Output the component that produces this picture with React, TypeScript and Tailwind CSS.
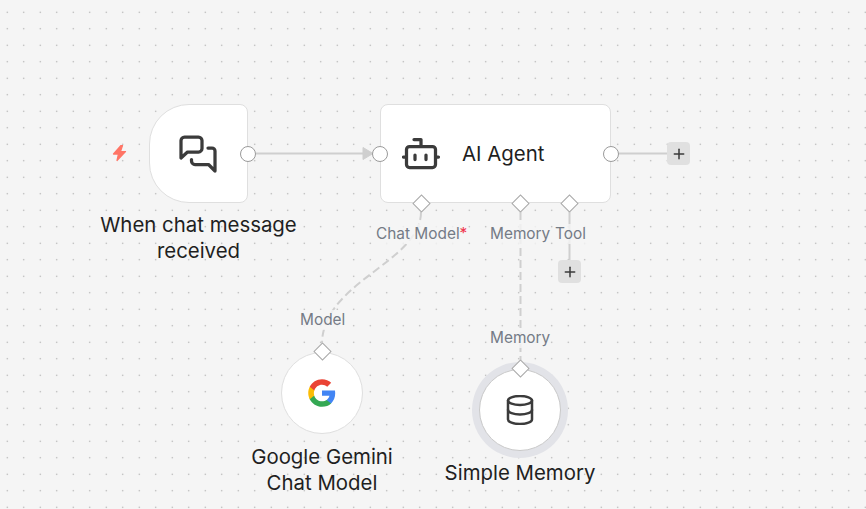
import { Plus } from 'lucide-react';

const Handle = ({ className }: { className: string }) => (
  <div className={`absolute w-4 h-4 rounded-full bg-white border border-[#9a9a9a] ${className}`} />
);

const Diamond = ({ className }: { className: string }) => (
  <div className={`absolute w-[13px] h-[13px] rotate-45 bg-white border border-[#a8a8a8] ${className}`} />
);

const PlusButton = ({ className }: { className: string }) => (
  <div className={`absolute w-[23px] h-[23px] rounded bg-[#e0e0e0] flex items-center justify-center text-[#3a3a3a] ${className}`}>
    <Plus size={16} strokeWidth={2.25} />
  </div>
);

const EdgeLabel = ({ className, children }: { className: string; children: React.ReactNode }) => (
  <div className={`absolute text-[15.4px] leading-5 text-[#747b86] bg-[#f5f5f5]/80 whitespace-nowrap ${className}`}>{children}</div>
);

const NodeLabel = ({ className, children }: { className: string; children: React.ReactNode }) => (
  <div className={`absolute text-[20.4px] leading-[26px] text-[#1f1f1f] text-center ${className}`}>{children}</div>
);

const Edges = () => (
  <svg className="absolute inset-0" width="866" height="509" fill="none">
    <path d="M256 153.5H364" stroke="#cfcfcf" strokeWidth="2" />
    <path d="M363 147.5L373 153.5L363 159.5Z" fill="#cfcfcf" stroke="#cfcfcf" strokeWidth="1" />
    <path d="M619 153.5H668" stroke="#cfcfcf" strokeWidth="2" />
    <path d="M569.5 212V260" stroke="#cfcfcf" strokeWidth="2" />
    <path d="M520.5 212V360" stroke="#cfcfcf" strokeWidth="2" strokeDasharray="8 4" />
    <path d="M421 212C421 262 322 282 322 344" stroke="#cfcfcf" strokeWidth="2" strokeDasharray="8 4" />
  </svg>
);

const App = () => {
  return (
    <div
      className="relative w-[866px] h-[509px] overflow-hidden bg-[#f5f5f5] bg-[radial-gradient(circle,#a3a3a3_0.7px,transparent_1px)] bg-[size:16.5px_16.5px] bg-[position:-1px_4px]"
      style={{ fontFamily: 'Inter, sans-serif' }}
    >
      <Edges />

      {/* trigger bolt */}
      <svg className="absolute left-[111px] top-[144px]" width="17" height="18" viewBox="0 0 17 18">
        <path d="M10 1.500L2.500 10H7.500L6 16.500L14.500 7.500H9.500L11.500 1.500Z" fill="#ff7566" stroke="#ff7566" strokeWidth="1.250" strokeLinejoin="round" />
      </svg>

      {/* chat trigger */}
      <div className="absolute left-[149px] top-[104px] w-[98.500px] h-[99px] bg-white border border-[#dfdfdf] rounded-l-[40px] rounded-r-lg flex items-center justify-center">
        <svg className="ml-0.5" width="40" height="40" viewBox="0 0 40 40" fill="none" stroke="#3b3b3b" strokeWidth="3.250" strokeLinecap="round" strokeLinejoin="round">
          <path d="M2 24V6.500A3.500 3.500 0 0 1 5.500 3H19.500A3.500 3.500 0 0 1 23 6.500V14.500A3.500 3.500 0 0 1 19.500 18H8.500Z" />
          <path d="M29 14H33A3 3 0 0 1 36 17V37L29.500 30.500H16A3.500 3.500 0 0 1 12.500 27V25.500" />
        </svg>
      </div>
      <Handle className="left-[240px] top-[146px]" />
      <NodeLabel className="left-[88px] top-[212px] w-[221px]">When chat message received</NodeLabel>

      {/* agent */}
      <div className="absolute left-[380px] top-[104px] w-[231px] h-[99px] bg-white border border-[#dfdfdf] rounded-lg flex items-center pl-[21px]">
        <svg className="w-10 h-10" viewBox="0 0 40 40" fill="none" stroke="#3b3b3b" strokeWidth="3.250" strokeLinecap="round" strokeLinejoin="round">
          <path d="M19 12V5.500H12" />
          <rect x="4.500" y="12.500" width="29" height="21" rx="3" />
          <path d="M1.500 23H3M35 23H36.500" />
          <path d="M13 21V25.500M24 21V25.500" />
        </svg>
        <span className="ml-[20px] mt-0.5 text-[20.4px] text-[#1f1f1f] leading-none">AI Agent</span>
      </div>
      <Handle className="left-[372px] top-[146px]" />
      <Handle className="left-[603px] top-[146px]" />
      <PlusButton className="left-[667px] top-[142px]" />

      <Diamond className="left-[415px] top-[197px]" />
      <Diamond className="left-[514px] top-[197px]" />
      <Diamond className="left-[563px] top-[197px]" />
      <EdgeLabel className="left-[376px] top-[224px]">
        Chat Model<span className="text-[#f0324b]">*</span>
      </EdgeLabel>
      <EdgeLabel className="left-[490px] top-[224px]">Memory</EdgeLabel>
      <EdgeLabel className="left-[555px] top-[224px]">Tool</EdgeLabel>
      <PlusButton className="left-[558px] top-[260px]" />

      {/* gemini */}
      <EdgeLabel className="left-[300px] top-[310px]">Model</EdgeLabel>
      <div className="absolute left-[281px] top-[352px] w-[82px] h-[82px] rounded-full bg-white border border-[#dfdfdf] flex items-center justify-center">
        <svg width="30" height="30" viewBox="0 0 24 24">
          <path fill="#4285F4" d="M22.56 12.25c0-.78-.07-1.53-.2-2.25H12v4.26h5.92c-.26 1.37-1.04 2.53-2.21 3.31v2.77h3.57c2.08-1.92 3.28-4.74 3.28-8.09z" />
          <path fill="#34A853" d="M12 23c2.97 0 5.46-.98 7.28-2.66l-3.57-2.77c-.98.66-2.23 1.06-3.71 1.06-2.86 0-5.29-1.93-6.16-4.53H2.18v2.84C3.99 20.53 7.7 23 12 23z" />
          <path fill="#FBBC05" d="M5.84 14.09c-.22-.66-.35-1.36-.35-2.09s.13-1.43.35-2.09V7.07H2.18C1.43 8.55 1 10.22 1 12s.43 3.45 1.18 4.93l3.66-2.84z" />
          <path fill="#EA4335" d="M12 5.38c1.62 0 3.06.56 4.21 1.64l3.15-3.15C17.45 2.09 14.97 1 12 1 7.7 1 3.99 3.47 2.18 7.07l3.66 2.84c.87-2.6 3.3-4.530 6.16-4.530z" />
        </svg>
      </div>
      <Diamond className="left-[315.500px] top-[345px]" />
      <NodeLabel className="left-[232px] top-[444px] w-[180px]">Google Gemini Chat Model</NodeLabel>

      {/* memory */}
      <EdgeLabel className="left-[490px] top-[328px]">Memory</EdgeLabel>
      <div className="absolute left-[472px] top-[362px] w-[96px] h-[96px] rounded-full bg-[#e2e3e8] flex items-center justify-center">
        <div className="w-[82px] h-[82px] rounded-full bg-white border border-[#c9c9c9] flex items-center justify-center">
          <svg width="28" height="30" viewBox="0 0 28 30" fill="none" stroke="#3b3b3b" strokeWidth="2.500" strokeLinecap="round" strokeLinejoin="round">
            <ellipse cx="14" cy="5.500" rx="12" ry="4.500" />
            <path d="M2 5.500V24.500C2 27 7.400 29 14 29S26 27 26 24.500V5.500" />
            <path d="M2 15C2 17.500 7.400 19.500 14 19.500S26 17.500 26 15" />
          </svg>
        </div>
      </div>
      <Diamond className="left-[514px] top-[362px]" />
      <NodeLabel className="left-[420px] top-[460px] w-[200px]">Simple Memory</NodeLabel>
    </div>
  );
};

export default App;
